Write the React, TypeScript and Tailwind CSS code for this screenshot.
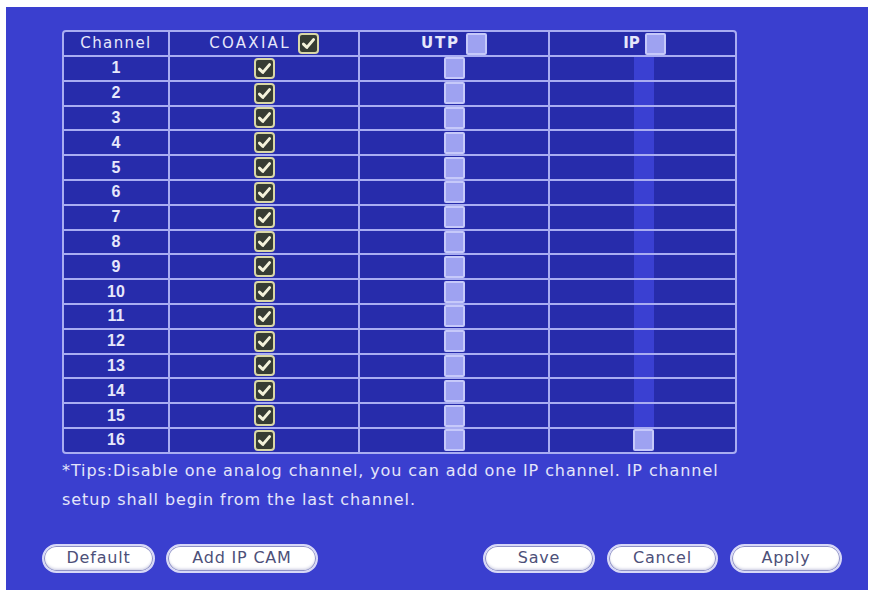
import React from "react";

const channels = Array.from({ length: 16 }, (_, i) => i + 1);

function CheckedBox() {
  return (
    <div className="w-[21px] h-[21px] rounded-[4px] border-2 border-[#d9d7a6] bg-[#363c33] flex items-center justify-center">
      <svg width="15" height="15" viewBox="0 0 14 14">
        <path d="M2.3 7.6 L5.5 10.6 L11.7 3.4" fill="none" stroke="#f3f2da" strokeWidth="2.8" strokeLinecap="round" strokeLinejoin="round" />
      </svg>
    </div>
  );
}

function EmptyBox() {
  return <div className="w-[21px] h-[22px] rounded-[2px] border-2 border-[#c6c9fa] bg-[#9ea2f1]" />;
}

function PillButton({ label, width }: { label: string; width: string }) {
  return (
    <button
      className={`${width} h-[29px] rounded-full bg-white border-2 border-[#d7d8f7] shadow-[inset_0_0_0_1px_#8e91c6,inset_0_-2px_3px_#c9cae0] text-[16px] tracking-[0.8px] text-[#4d5079] flex items-center justify-center`}
    >
      {label}
    </button>
  );
}

export default function App() {
  return (
    <div className="w-[876px] h-[590px] bg-white pt-[7px] pl-[6px] pr-[8px] flex font-['DejaVu_Sans',sans-serif]">
      <div className="flex-1 bg-[#3a3fcf] pt-[23px] flex flex-col">
        <div className="ml-[56px] w-fit grid grid-cols-[104px_188px_188px_185px] grid-rows-[23px_repeat(16,22.8px)] gap-[2px] bg-[#a9adf2] border-2 border-[#a9adf2] rounded-[4px] overflow-hidden text-[#e6e7fb]">
          {/* header row */}
          <div className="bg-[#272cab] flex items-center justify-center text-[15px] tracking-[1.4px]">Channel</div>
          <div className="bg-[#272cab] flex items-center justify-center gap-[7px]">
            <span className="text-[15px] tracking-[2.3px]">COAXIAL</span>
            <CheckedBox />
          </div>
          <div className="bg-[#272cab] flex items-center justify-center gap-[6px]">
            <span className="text-[15px] font-bold tracking-[1.8px]">UTP</span>
            <EmptyBox />
          </div>
          <div className="bg-[#272cab] flex items-center justify-center gap-[5px] pl-[4px]">
            <span className="text-[15px] font-bold">IP</span>
            <EmptyBox />
          </div>

          {channels.map((n) => (
            <React.Fragment key={n}>
              <div className="bg-[#272cab] flex items-center justify-center font-['Liberation_Sans',sans-serif] text-[16px] font-bold">
                {n}
              </div>
              <div className="bg-[#272cab] flex items-center justify-center">
                <CheckedBox />
              </div>
              <div className="bg-[#272cab] flex items-center justify-center">
                <EmptyBox />
              </div>
              <div className="bg-[#272cab] flex items-stretch justify-center pl-[2px]">
                {n === 16 ? (
                  <div className="flex items-center">
                    <EmptyBox />
                  </div>
                ) : (
                  <div className="w-[20px] bg-[#3a40d2]" />
                )}
              </div>
            </React.Fragment>
          ))}
        </div>

        <div className="ml-[56px] mt-[2px] text-[16px] leading-[29px] text-[#e4e5fa] tracking-[0.9px]">
          <div className="whitespace-nowrap">*Tips:Disable one analog channel, you can add one IP channel. IP channel</div>
          <div className="whitespace-nowrap">setup shall begin from the last channel.</div>
        </div>

        <div className="mt-[30px] flex items-center pl-[36px] pr-[26px]">
          <PillButton label="Default" width="w-[113px]" />
          <div className="ml-[11px]">
            <PillButton label="Add IP CAM" width="w-[152px]" />
          </div>
          <div className="ml-auto flex gap-[12px]">
            <PillButton label="Save" width="w-[112px]" />
            <PillButton label="Cancel" width="w-[111px]" />
            <PillButton label="Apply" width="w-[112px]" />
          </div>
        </div>
      </div>
    </div>
  );
}
